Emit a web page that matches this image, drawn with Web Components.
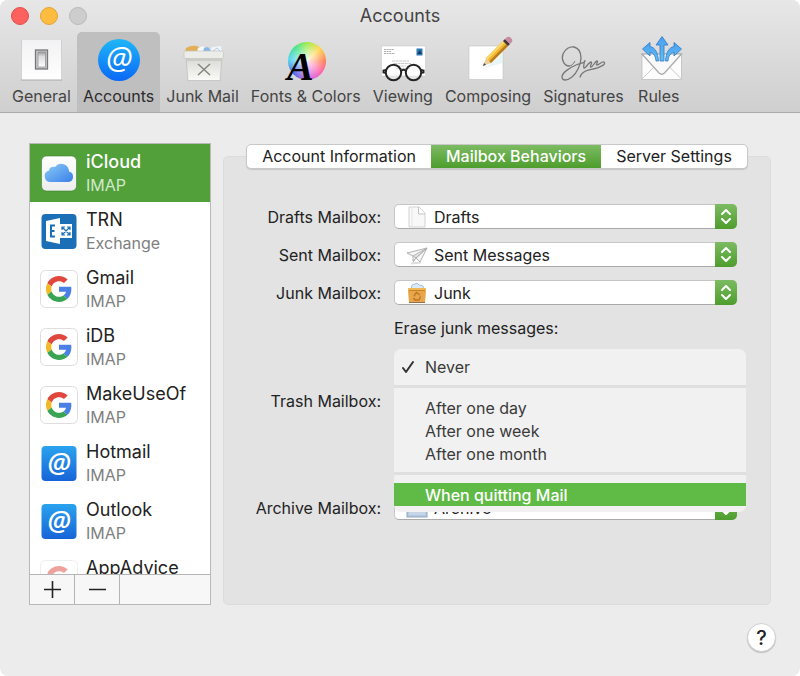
<!DOCTYPE html>
<html lang="en">
<head>
<meta charset="utf-8">
<title>Accounts</title>
<style>
  body {
    margin: 0;
    background: #fff;
    color: #222;
    font: 16px/20px Inter, "Liberation Sans", sans-serif;
  }
</style>
</head>
<body>

<prefs-window heading="Accounts">
  <tool-item slot="tools" icon="general" label="General"></tool-item>
  <tool-item slot="tools" icon="accounts" label="Accounts" selected></tool-item>
  <tool-item slot="tools" icon="junkmail" label="Junk Mail"></tool-item>
  <tool-item slot="tools" icon="fonts" label="Fonts &amp; Colors"></tool-item>
  <tool-item slot="tools" icon="viewing" label="Viewing"></tool-item>
  <tool-item slot="tools" icon="composing" label="Composing"></tool-item>
  <tool-item slot="tools" icon="signatures" label="Signatures"></tool-item>
  <tool-item slot="tools" icon="rules" label="Rules"></tool-item>

  <account-list slot="side">
    <account-row icon="icloud" name="iCloud" kind="IMAP" selected></account-row>
    <account-row icon="exchange" name="TRN" kind="Exchange"></account-row>
    <account-row icon="google" name="Gmail" kind="IMAP"></account-row>
    <account-row icon="google" name="iDB" kind="IMAP"></account-row>
    <account-row icon="google" name="MakeUseOf" kind="IMAP"></account-row>
    <account-row icon="at" name="Hotmail" kind="IMAP"></account-row>
    <account-row icon="at" name="Outlook" kind="IMAP"></account-row>
    <account-row icon="google" name="AppAdvice" kind="" inactive></account-row>
  </account-list>

  <tab-panel tabs="Account Information|Mailbox Behaviors|Server Settings" current="1">
    <mailbox-picker label="Drafts Mailbox:" icon="draft" value="Drafts"></mailbox-picker>
    <mailbox-picker label="Sent Mailbox:" icon="sent" value="Sent Messages"></mailbox-picker>
    <mailbox-picker label="Junk Mailbox:" icon="junk" value="Junk"></mailbox-picker>
    <erase-setting label="Erase junk messages:">
      <menu-choice label="Never" checked></menu-choice>
      <menu-line></menu-line>
      <menu-choice label="After one day"></menu-choice>
      <menu-choice label="After one week"></menu-choice>
      <menu-choice label="After one month"></menu-choice>
      <menu-line></menu-line>
      <menu-choice label="When quitting Mail" active></menu-choice>
    </erase-setting>
    <mailbox-picker label="Trash Mailbox:" value=""></mailbox-picker>
    <mailbox-picker class="last" label="Archive Mailbox:" icon="archive" value="Archive"></mailbox-picker>
  </tab-panel>
</prefs-window>

<script>
const ICONS = {
  general: ['0 0 46 46', `
    <defs><linearGradient id="a" x2="0" y2="1"><stop stop-color="#f2f2f4"/><stop offset="1" stop-color="#fff"/></linearGradient>
    <linearGradient id="b" x2="0" y2="1"><stop stop-color="#9a9a9a"/><stop offset=".3" stop-color="#dcdcdc"/><stop offset="1" stop-color="#fdfdfd"/></linearGradient></defs>
    <rect x="3" y="4" width="41" height="40.500" fill="#aaa"/>
    <rect x="3.500" y="4" width="40" height="39.500" fill="url(#a)"/>
    <rect x="17.500" y="14" width="12" height="19" fill="#c9c9cb" stroke="#77777b" stroke-width="1.300"/>
    <rect x="20" y="16" width="7.500" height="15" fill="url(#b)" stroke="#8d8d90" stroke-width=".7"/>`],
  accounts: ['0 0 46 46', `
    <defs><linearGradient id="a" x2="0" y2="1"><stop stop-color="#1fb6f8"/><stop offset="1" stop-color="#0a68f6"/></linearGradient></defs>
    <circle cx="23" cy="24" r="21" fill="url(#a)"/>
    <text x="23" y="33" text-anchor="middle" font-family="Open Sans" font-style="italic" font-size="31" fill="#fff">@</text>`],
  junkmail: ['0 0 46 46', `
    <defs><linearGradient id="a" x2="0" y2="1"><stop stop-color="#d9d9d5"/><stop offset="1" stop-color="#fafaf8"/></linearGradient></defs>
    <path d="M5 16 6 12q5-3 11-2l3 2v5z" fill="#e3af55"/>
    <path d="m17 16 1-4 5-2 4 6z" fill="#f5f9fb"/>
    <path d="m23 16 1-4 4-1 4 5z" fill="#86b8e6"/>
    <path d="m30 16 2-5 9-1 1 6z" fill="#edf5fa"/><path d="m33 15 4-3 3 3" fill="none" stroke="#b9cdda"/>
    <path d="M6 22h36l-2 22.500H8z" fill="url(#a)" stroke="#b4b4b0" stroke-width=".6"/>
    <rect x="4" y="15" width="39.500" height="7.500" rx="1.500" fill="#ecece9" stroke="#c4c4c0" stroke-width=".7"/>
    <path d="M7 24h34" stroke="#c6c6c2" stroke-width="1.500"/>
    <path d="m18 28 12 11M30 28 18 39" stroke="#85857f" stroke-width="1.500" fill="none"/>`],
  fonts: ['0 0 46 46', `
    <foreignObject x="5" y="6" width="38" height="38"><div style="width:38px;height:38px;border-radius:50%;background:radial-gradient(#fffd 0,#fff6 40%,#fff0 70%),conic-gradient(#9bea4c,#ffd84c 45deg,#ff7a50 90deg,#ff5fae 130deg,#c964ea 175deg,#5263e8 225deg,#4fd4f0 275deg,#42e389 320deg,#9bea4c)"></div></foreignObject>
    <text x="4" y="44" font-family="Liberation Serif" font-weight="bold" font-style="italic" font-size="40" fill="#000">A</text>`],
  viewing: ['0 0 46 46', `
    <rect x="1.500" y="10" width="44" height="30" fill="#fff" stroke="#c4c4c4" stroke-width=".5"/>
    <path d="M4 13.500h10M4 15.500h7M4 17.500h11" stroke="#999" stroke-width=".8" stroke-dasharray="2 .6"/>
    <path d="M12 25h17M14 27.500h17M14 30h12M16 32.500h14" stroke="#bbb" stroke-width=".8" stroke-dasharray="3 .6"/>
    <rect x="36.500" y="12.500" width="6" height="7" fill="#2c7bb2"/><path d="m37 18 3-4 2 4z" fill="#163c63"/>
    <g fill="#ffffff66" stroke="#242424" stroke-width="2"><circle cx="13.500" cy="36.500" r="7.700"/><circle cx="33.500" cy="36.500" r="7.700"/></g>
    <path d="M21 35q2.500-2.500 5 0M6 34l-2.500.5v2l2 .3M41 34l2.500.5v2l-2 .3" fill="none" stroke="#242424" stroke-width="2"/>`],
  composing: ['0 0 46 46', `
    <rect x="4" y="10" width="34" height="33.500" fill="#fff" stroke="#c2c2c2" stroke-width=".6"/>
    <path d="m20 32 13-11 5-6v12z" fill="#dceef0" opacity=".6"/>
    <path d="m18 30 3-8 5 5z" fill="#e9cf9e"/><path d="m18 30 1-3 2 1.800z" fill="#444"/>
    <path d="M21 22 38 5l5 5-17 17z" fill="#f2b62f"/><path d="M21 22 38 5l1.700 1.700-17 17z" fill="#f9d56a"/>
    <path d="m24.300 25.300 17-17L43 10 26 27z" fill="#b67c1e"/>
    <path d="m38 5 2-2 5 5-2 2z" fill="#3d3538"/>
    <path d="m40 3 2-2q2-1 4 1t1 4l-2 2z" fill="#c98ba4"/>`],
  signatures: ['0 0 46 46', `
    <path d="M8 30C3 30 0 23 2 18S9 10 13 11s7 5 7 11-4 15-9 19-10 4-10 0 7-9 14-12 9-2 9-4-2 6-1 7 5-6 7-6-2 5 0 5 4-6 6-6-2 4 0 4 5-4 7-3c3 2-5 6-11 7-5 1-11 2-13 8" fill="none" stroke="#777" stroke-width="1.300" stroke-linecap="round"/>
    <path d="M8 30c3 0 4-2 6-5" fill="none" stroke="#777"/>`],
  rules: ['0 0 46 46', `
    <defs><linearGradient id="a" x2="0" y2="1"><stop stop-color="#4b9ff0"/><stop offset="1" stop-color="#63c0f4"/></linearGradient></defs>
    <rect x="6" y="18" width="39.500" height="25.500" fill="#fcfcfc" stroke="#bdbdbd" stroke-width=".8"/>
    <path d="m6 43 14-14M45.500 43l-14-14" stroke="#c9c9c9" fill="none"/>
    <path d="M6 18h39.500L28.500 37q-2.700 2.500-5.500 0z" fill="#f9f9f9" stroke="#aaa" stroke-width="1.200"/>
    <g fill="url(#a)" stroke="#2f78c4" stroke-width=".8">
    <path d="M24 25V9h-4l6-8.500L32 9h-4v16z"/>
    <path d="m6.500 13 7.500-6.500v4c5 1 8 6 8.500 14.500h-2.500c-.5-5-2-7.500-6-9v4z"/>
    <path d="m45.500 13-7.500-6.500v4c-5 1-8 6-8.500 14.500h2.500c.5-5 2-7.500 6-9v4z"/></g>`],
  icloud: ['0 0 38 38', `
    <defs><linearGradient id="a" x2="1" y2="1"><stop stop-color="#8accf6"/><stop offset="1" stop-color="#3b7fe8"/></linearGradient>
    <linearGradient id="b" x2="0" y2="1"><stop stop-color="#fff"/><stop offset="1" stop-color="#ededed"/></linearGradient></defs>
    <rect x="1.500" y="2" width="35" height="35" rx="5" fill="url(#b)" stroke="#3f8130" stroke-width=".6"/>
    <path d="M10.500 28a5.800 5.800 0 0 1-1.500-11.400 4.500 4.500 0 0 1 6-3.600 7.800 7.800 0 0 1 14 4.600A5.300 5.300 0 0 1 28.500 28z" fill="url(#a)"/>`],
  exchange: ['0 0 38 38', `
    <rect x="1.500" y="2" width="35" height="35" rx="4" fill="#1b6fb7"/>
    <path d="M20 12h12v14H20z" fill="#fff"/>
    <path d="m22 15 8 8M30 15l-8 8M22 18v-3h3M27 15h3v3M30 20v3h-3M25 23h-3v-3" fill="none" stroke="#1b6fb7" stroke-width="1.200"/>
    <path d="m6 9 14-3v26L6 29z" fill="#fff"/>
    <path d="M15 13.500h-4v11h4M11 19h3.500" fill="none" stroke="#1b6fb7" stroke-width="2"/>`],
  google: ['0 0 38 38', `
    <rect x=".5" y=".5" width="37" height="37" rx="5" fill="#fff" stroke="#dedede"/>
    <g transform="translate(6 6) scale(.54)">
    <path fill="#e0483e" d="M24 9.500c3.540 0 6.710 1.220 9.210 3.600l6.850-6.850C35.900 2.380 30.470 0 24 0 14.620 0 6.510 5.380 2.560 13.220l7.980 6.190C12.430 13.720 17.740 9.500 24 9.500z"/>
    <path fill="#4a7fe6" d="M46.980 24.550c0-1.570-.15-3.090-.38-4.550H24v9.020h12.940c-.58 2.960-2.260 5.480-4.780 7.180l7.730 6c4.510-4.180 7.090-10.360 7.090-17.650z"/>
    <path fill="#f4b926" d="M10.530 28.590c-.48-1.450-.76-2.990-.76-4.590s.27-3.140.76-4.590l-7.980-6.190C.92 16.460 0 20.120 0 24s.92 7.540 2.560 10.780z"/>
    <path fill="#38a454" d="M24 48c6.480 0 11.930-2.130 15.890-5.810l-7.730-6c-2.150 1.450-4.920 2.300-8.160 2.300-6.260 0-11.570-4.220-13.470-9.910l-7.980 6.190C6.510 42.620 14.620 48 24 48z"/></g>`],
  at: ['0 0 38 38', `
    <defs><linearGradient id="a" x2="0" y2="1"><stop stop-color="#2aa3ee"/><stop offset="1" stop-color="#1764d8"/></linearGradient></defs>
    <rect x="1.500" y="2" width="35" height="35" rx="4" fill="url(#a)"/>
    <text x="19" y="28" text-anchor="middle" font-family="Open Sans" font-weight="600" font-style="italic" font-size="27" fill="#fff">@</text>`],
  draft: ['0 0 22 22', `
    <path d="M3 1h10l6 6v14H3z" fill="#f8f8f8" stroke="#d2d2d2"/><path d="M12.500 1v7H19" fill="#fff" stroke="#c2c2c2"/>
    <path d="M6 1v20" stroke="#e6e6e6"/>`],
  sent: ['0 0 22 22', `
    <path d="m5 19.500 10-1" stroke="#ddd" stroke-width="2"/>
    <path d="M1 9 21 4l-7 14-4-4-3 3v-5z" fill="#f6f6f6" stroke="#aaa" stroke-width=".9"/>
    <path d="M21 4 7 12l3 2zM10 14l-3 4M21 4 10 14" fill="#e2e2e2" stroke="#aaa" stroke-width=".8"/>`],
  junk: ['0 0 22 22', `
    <path d="m5 8 1-5 3-1 2-1 2 2 4 1 1 4z" fill="#dbe9f8" stroke="#8db5dd" stroke-width=".8"/>
    <path d="M2 6h18v3H2z" fill="#f0b757"/><path d="M2 9h18l-1 11.500H3z" fill="#e8a549"/>
    <path d="M3 8.500h16" stroke="#c98127"/>
    <path d="m8 14 2.500-3.500L14 13M14.500 14.500 13 18h-4l-1.500-2" fill="none" stroke="#b97728" stroke-width="1.400"/>
    <path d="M3 20.500h16" stroke="#8c7154"/>`],
  archive: ['0 0 22 22', `
    <rect x="1" y="4" width="20" height="16" fill="#b5cae2" stroke="#93a7c0"/><rect x="3" y="14" width="16" height="4" fill="#c6d5e8"/>`],
};

// every component is markup + styles dropped in an open shadow root
class BaseElement extends HTMLElement {

  connectedCallback() {

    this.attachShadow({mode: 'open'}).innerHTML = `<style>
      *, :host { box-sizing: border-box; }
      button, select { font: inherit; color: inherit; margin: 0; border: 0; background: none; appearance: none; }
      ${this.styles()}</style>${this.markup()}`
  }

  attr(name) {

    return (this.getAttribute(name) || '').replace(/&/g, '&amp;')
  }
}

class PrefsIcon extends BaseElement {

  styles() {
    return `:host { display: block; } svg { display: block; width: 100%; height: 100%; overflow: visible; }`
  }

  markup() {

    const icon = ICONS[this.getAttribute('name')]
    return icon ? `<svg viewBox="${icon[0]}" aria-hidden="true">${icon[1]}</svg>` : ''
  }
}

class PrefsWindow extends BaseElement {

  styles() {
    return `
      :host { display: flex; flex-direction: column; min-height: 100vh; background: #ececec; border-radius: 8px; overflow: hidden; }
      header { background: linear-gradient(#e7e7e7, #cfcfcf); border-bottom: 1px solid #aaa; color: #444; }
      .bar { display: grid; grid-template-columns: 1fr auto 1fr; align-items: center; height: 32px; padding: 0 11px; }
      .lights { display: flex; gap: 11px; }
      .lights button { width: 18px; height: 18px; border-radius: 50%; background: #fc615d; border: 1px solid #e0504c; }
      .lights button:nth-child(2) { background: #fdbc40; border-color: #e0a436; }
      .lights button:nth-child(3) { background: #cdcdcd; border-color: #b9b9b9; }
      h1 { margin: 0; font: inherit; font-size: 18px; }
      nav { display: flex; padding: 0 6px; }
      main { display: grid; grid-template-columns: 182px 1fr; gap: 12px; padding: 30px 29px 0; }
      footer { display: flex; justify-content: flex-end; padding: 18px 24px 24px; }
      .help { width: 29px; height: 29px; padding: 0; border-radius: 50%; background: #fff; border: 1px solid #d0d0d0; box-shadow: 0 1px 1px #0003; font-size: 20px; font-weight: 500; }
    `
  }

  markup() {
    return `
      <header>
        <div class="bar">
          <div class="lights"><button aria-label="Close"></button><button aria-label="Minimize"></button><button aria-label="Zoom" disabled></button></div>
          <h1>${this.attr('heading')}</h1>
        </div>
        <nav><slot name="tools"></slot></nav>
      </header>
      <main><slot name="side"></slot><slot></slot></main>
      <footer><button class="help">?</button></footer>
    `
  }
}

class ToolItem extends BaseElement {

  styles() {
    return `
      :host { display: block; }
      button { display: flex; flex-direction: column; align-items: center; gap: 4px; height: 80px; padding: 4px 6px 0; border-radius: 5px 5px 0 0; }
      :host([selected]) button { background: #bfbfbf; color: #2b2b2b; }
      prefs-icon { width: 46px; height: 46px; }
    `
  }

  markup() {
    return `<button><prefs-icon name="${this.attr('icon')}"></prefs-icon><span>${this.attr('label')}</span></button>`
  }
}

class AccountList extends BaseElement {

  styles() {
    return `
      :host { display: flex; flex-direction: column; border: 1px solid #b9b9b9; background: #fff; }
      .rows { flex: 1; contain: size; overflow-y: auto; scrollbar-width: none; }
      .actions { display: flex; height: 30px; border-top: 1px solid #b4b4b4; background: #f7f7f7; }
      .actions button { display: grid; place-items: center; width: 45px; padding: 0; border-right: 1px solid #b4b4b4; }
      svg { width: 17px; height: 17px; stroke: #222; stroke-width: 1.6; }
    `
  }

  markup() {
    return `
      <div class="rows"><slot></slot></div>
      <div class="actions">
        <button aria-label="Add account"><svg viewBox="0 0 17 17"><path d="M8.500 0v17M0 8.500h17"/></svg></button>
        <button aria-label="Remove account"><svg viewBox="0 0 17 17"><path d="M0 8.500h17"/></svg></button>
      </div>
    `
  }
}

class AccountRow extends BaseElement {

  styles() {
    return `
      :host { display: block; }
      button { display: flex; align-items: center; gap: 8px; width: 100%; height: 58px; padding: 0 10px; text-align: left; }
      :host([selected]) button { background: #51a03a; color: #fff; }
      prefs-icon { width: 38px; height: 38px; flex: none; }
      :host([inactive]) prefs-icon { opacity: .5; }
      .name { display: block; font-size: 18px; line-height: 24px; }
      .kind { display: block; min-height: 22px; line-height: 22px; color: #808080; }
      :host([selected]) .name { font-weight: 500; }
      :host([selected]) .kind { color: #d3e8cc; }
    `
  }

  markup() {
    return `<button><prefs-icon name="${this.attr('icon')}"></prefs-icon>
      <span><span class="name">${this.attr('name')}</span><span class="kind">${this.attr('kind')}</span></span></button>`
  }
}

class TabPanel extends BaseElement {

  styles() {
    return `
      :host { display: block; }
      [role=tablist] { position: relative; display: flex; width: fit-content; margin: 1px auto -13px; border: 1px solid #c8c8c8; border-radius: 5px; background: #fff; box-shadow: 0 1px 1px #0002; overflow: hidden; }
      [role=tab] { height: 23px; padding: 0 15px; line-height: 23px; }
      [aria-selected=true] { background: linear-gradient(#7dbb63, #4d9d2c); color: #fff; font-weight: 500; }
      [role=tabpanel] { display: grid; gap: 13px; padding: 47px 33px 84px 0; background: #e3e3e3; border: 1px solid #dcdcdc; border-radius: 5px; }
      ::slotted(.last) { margin-top: 69px; }
    `
  }

  markup() {

    const current = Number(this.getAttribute('current'))
    const tabs = this.attr('tabs').split('|').map((tab, i) =>
      `<button role="tab" aria-selected="${i === current}">${tab}</button>`)
    return `<div role="tablist">${tabs.join('')}</div><div role="tabpanel"><slot></slot></div>`
  }
}

class MailboxPicker extends BaseElement {

  styles() {
    return `
      :host { display: grid; grid-template-columns: 157px 1fr; gap: 13px; align-items: center; }
      label { text-align: right; }
      .field { display: grid; grid-template-columns: 40px 1fr 22px; align-items: center; height: 25px; }
      select { grid-area: 1 / 1 / 2 / 4; width: 100%; height: 25px; padding: 0 30px 0 39px; background: #fff; border: 1px solid #c6c6c6; border-bottom-color: #aaa; border-radius: 5px; }
      prefs-icon { grid-area: 1 / 1; width: 22px; height: 22px; margin-left: 12px; z-index: 1; pointer-events: none; }
      .arrows { grid-area: 1 / 3; width: 22px; height: 25px; border-radius: 0 5px 5px 0; background: linear-gradient(#7dbb63, #4d9d2c); z-index: 1; pointer-events: none; }
      path { fill: none; stroke: #fff; stroke-width: 2; stroke-linecap: round; stroke-linejoin: round; }
    `
  }

  markup() {
    return `
      <label for="box">${this.attr('label')}</label>
      <div class="field">
        <select id="box"><option>${this.attr('value')}</option></select>
        <prefs-icon name="${this.attr('icon')}"></prefs-icon>
        <svg class="arrows" viewBox="0 0 22 25"><path d="m7 10 4-4 4 4M7 15l4 4 4-4"/></svg>
      </div>
    `
  }
}

class EraseSetting extends BaseElement {

  styles() {
    return `
      :host { display: grid; gap: 12px; padding-left: 170px; }
      .anchor { position: relative; height: 25px; }
      /* open pop-up, lies over the rows below it */
      [role=menu] { position: absolute; z-index: 2; top: -1px; left: 0; right: -9px; padding: 6px 0; border-radius: 7px; background: #f1f1f1; color: #3a3a3a; }
    `
  }

  markup() {
    return `<span id="title">${this.attr('label')}</span>
      <div class="anchor"><div role="menu" aria-labelledby="title"><slot></slot></div></div>`
  }
}

class MenuChoice extends BaseElement {

  styles() {
    return `
      :host { display: block; }
      button { display: flex; align-items: center; width: 100%; height: 23px; padding: 0 7px; text-align: left; }
      svg { width: 24px; height: 14px; fill: none; stroke: #333; stroke-width: 2; stroke-linecap: round; stroke-linejoin: round; }
      :host([active]) button { background: #60ba46; color: #fff; font-weight: 500; }
    `
  }

  markup() {

    const checked = this.hasAttribute('checked')
    return `<button role="menuitemradio" aria-checked="${checked}">
      <svg viewBox="0 0 24 14">${checked ? '<path d="m2 8 3 4 7-10"/>' : ''}</svg>${this.attr('label')}</button>`
  }
}

class MenuLine extends BaseElement {

  styles() {
    return `:host { display: block; height: 3px; margin: 7px 0 8px; background: #dfdfdf; }`
  }

  markup() {
    return ''
  }
}

window.customElements.define('prefs-icon', PrefsIcon);
window.customElements.define('prefs-window', PrefsWindow);
window.customElements.define('tool-item', ToolItem);
window.customElements.define('account-list', AccountList);
window.customElements.define('account-row', AccountRow);
window.customElements.define('tab-panel', TabPanel);
window.customElements.define('mailbox-picker', MailboxPicker);
window.customElements.define('erase-setting', EraseSetting);
window.customElements.define('menu-choice', MenuChoice);
window.customElements.define('menu-line', MenuLine);
</script>
</body>
</html>
